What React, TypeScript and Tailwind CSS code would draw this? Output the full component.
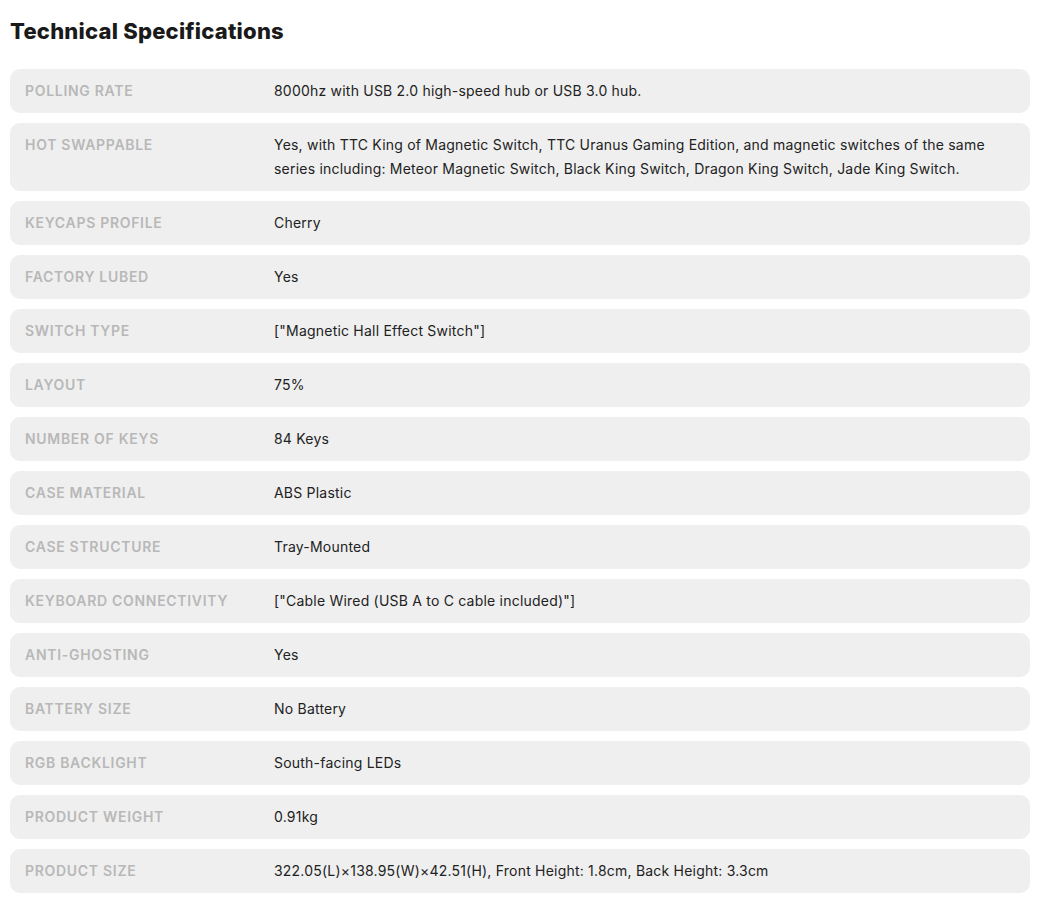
const SPECS: { label: string; value: string }[] = [
  { label: "Polling Rate", value: "8000hz with USB 2.0 high-speed hub or USB 3.0 hub." },
  {
    label: "Hot Swappable",
    value:
      "Yes, with TTC King of Magnetic Switch, TTC Uranus Gaming Edition, and magnetic switches of the same series including: Meteor Magnetic Switch, Black King Switch, Dragon King Switch, Jade King Switch.",
  },
  { label: "Keycaps Profile", value: "Cherry" },
  { label: "Factory Lubed", value: "Yes" },
  { label: "Switch Type", value: '["Magnetic Hall Effect Switch"]' },
  { label: "Layout", value: "75%" },
  { label: "Number of Keys", value: "84 Keys" },
  { label: "Case Material", value: "ABS Plastic" },
  { label: "Case Structure", value: "Tray-Mounted" },
  { label: "Keyboard Connectivity", value: '["Cable Wired (USB A to C cable included)"]' },
  { label: "Anti-Ghosting", value: "Yes" },
  { label: "Battery Size", value: "No Battery" },
  { label: "RGB Backlight", value: "South-facing LEDs" },
  { label: "Product Weight", value: "0.91kg" },
  { label: "Product Size", value: "322.05(L)×138.95(W)×42.51(H), Front Height: 1.8cm, Back Height: 3.3cm" },
];

export default function App() {
  return (
    <div className="min-h-screen bg-white pl-[10px] pr-[8px] pt-[17px] font-['Inter',sans-serif]">
      <h2 className="text-[22px] font-extrabold leading-[28px] tracking-[0.01em] text-[#1a1a1a]">
        Technical Specifications
      </h2>
      <div className="mt-[24px] flex flex-col gap-[10px]">
        {SPECS.map((s) => (
          <div key={s.label} className="flex rounded-[10px] bg-[#efefef] py-[10px] pl-[15px] pr-[20px]">
            <div className="w-[249px] shrink-0 text-[14px] font-semibold uppercase leading-[24px] tracking-[0.05em] text-[#b8b8b8]">
              {s.label}
            </div>
            <div className="text-[14px] leading-[24px] tracking-[0.015em] text-[#222]">{s.value}</div>
          </div>
        ))}
      </div>
    </div>
  );
}
